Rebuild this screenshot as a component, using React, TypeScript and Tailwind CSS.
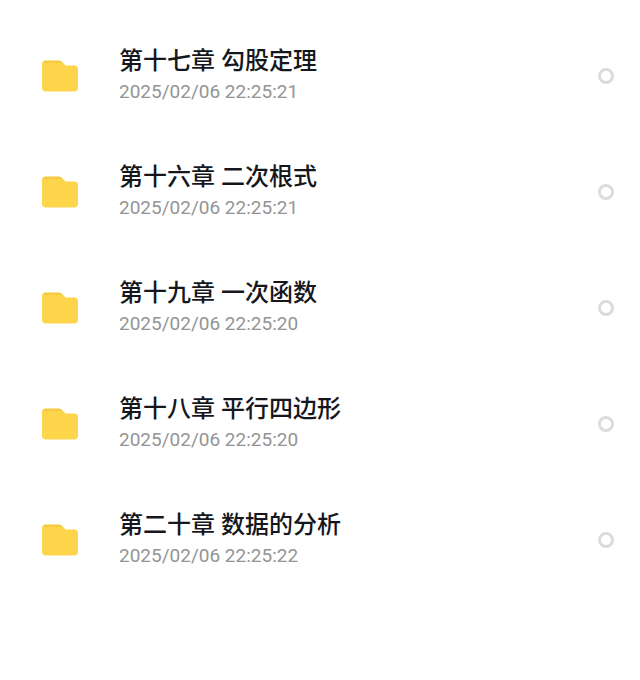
interface Folder {
  id: string;
  name: string;
  modified: string;
}

const folders: Folder[] = [
  { id: "ch17", name: "第十七章 勾股定理", modified: "2025/02/06 22:25:21" },
  { id: "ch16", name: "第十六章 二次根式", modified: "2025/02/06 22:25:21" },
  { id: "ch19", name: "第十九章 一次函数", modified: "2025/02/06 22:25:20" },
  { id: "ch18", name: "第十八章 平行四边形", modified: "2025/02/06 22:25:20" },
  { id: "ch20", name: "第二十章 数据的分析", modified: "2025/02/06 22:25:22" },
];

function FolderIcon() {
  return (
    <svg viewBox="0 0 38 32" className="w-[38px] h-8 shrink-0" aria-hidden="true">
      <defs>
        <linearGradient id="folder-fill" x1="0" y1="0" x2="0" y2="1">
          <stop offset="0.05" stopColor="#f4c63a" />
          <stop offset="0.24" stopColor="#fdd54b" />
        </linearGradient>
      </defs>
      <path
        d="M1 4.500A4 4 0 0 1 5 .5h12.500a5 5 0 0 1 3 1L24 5v5l-4 4H1z"
        fill="url(#folder-fill)"
      />
      <path
        d="M1 12a4 4 0 0 1 4-4h13l4.500-2.500h11A3.500 3.500 0 0 1 37 9v18.500a4 4 0 0 1-4 4H5a4 4 0 0 1-4-4z"
        fill="#fdd54b"
      />
    </svg>
  );
}

function FolderRow({ folder }: { folder: Folder }) {
  return (
    <li>
      <label htmlFor={folder.id} className="flex items-center h-[116px] pl-[41px] pr-[26px] cursor-pointer">
        <FolderIcon />
        <div className="flex-1 min-w-0 ml-10">
          <p className="text-[24px] leading-8 font-medium text-[#15171c] font-['Roboto','Noto_Sans_CJK_SC',sans-serif]">
            {folder.name}
          </p>
          <p className="text-[19px] leading-[30px] text-[#949494] font-['Roboto',sans-serif]">{folder.modified}</p>
        </div>
        <input
          id={folder.id}
          type="checkbox"
          className="appearance-none size-4 shrink-0 rounded-full border-[3px] border-[#dcdcdc] bg-white checked:bg-[#ffd64b]"
        />
      </label>
    </li>
  );
}

export default function App() {
  return (
    <main className="min-h-screen bg-white pt-[18px]">
      <ul>
        {folders.map((folder) => (
          <FolderRow key={folder.id} folder={folder} />
        ))}
      </ul>
    </main>
  );
}
